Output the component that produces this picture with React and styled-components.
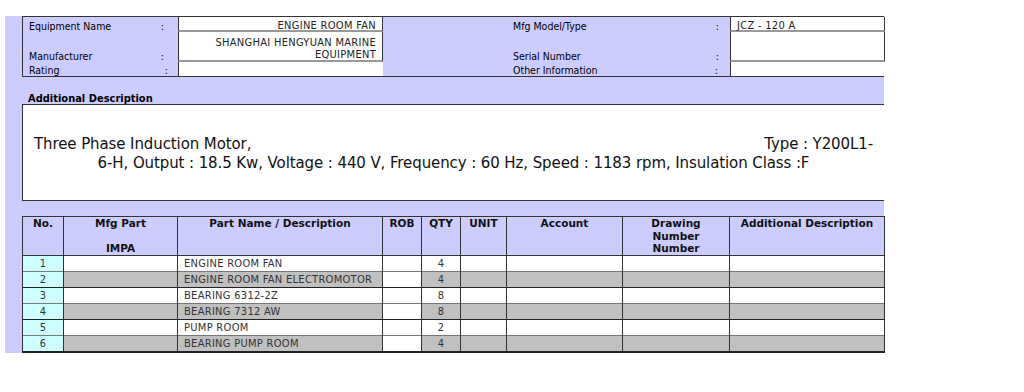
import styled, { createGlobalStyle } from "styled-components";

const GlobalStyle = createGlobalStyle`
    html, body {
        margin: 0;
        padding: 0;
        background: #fff;
    }
    body {
        font-family: "DejaVu Sans Condensed", "DejaVu Sans", sans-serif;
        font-stretch: condensed;
        color: #000;
    }
`;

const SPage = styled.div`
    padding: 16px 0 0 5px;
`;

const SPanel = styled.section`
    width: 862px;
    padding-left: 17px;
    background: #ccccff;
`;

const SInfo = styled.div`
    display: grid;
    grid-template-columns: 155px 205px 347px 155px;
    grid-template-rows: 15px 30px 14px;
    border: 1px solid #333;
    box-sizing: border-box;
    font-size: 11px;
`;

const SLabel = styled.div`
    display: flex;
    align-items: ${p => p.$bottom ? "flex-end" : "center"};
    justify-content: space-between;
    padding: 3px ${p => p.$pr || 14}px 0 ${p => p.$pl || 6}px;
    font-size: 10.5px;
    line-height: ${p => p.$bottom ? 11 : 13}px;
    white-space: nowrap;
`;

const SValue = styled.div`
    background: #fff;
    border-left: 1px solid #333;
    border-right: ${p => p.$last ? "none" : "1px solid #333"};
    border-bottom: ${p => p.$last ? "none" : "2px solid #999"};
    display: flex;
    flex-direction: column;
    justify-content: center;
    align-items: ${p => p.$left ? "flex-start" : "flex-end"};
    padding: ${p => p.$pt ?? 4}px 6px 0;
    line-height: 12px;
    text-align: ${p => p.$left ? "left" : "right"};
    color: #222;
    letter-spacing: 0.3px;
`;

const SSectionTitle = styled.div`
    height: 27px;
    display: flex;
    align-items: flex-end;
    padding: 0 0 0 6px;
    box-sizing: border-box;
    font-size: 11px;
    font-weight: bold;
    line-height: 10px;
`;

const SDescBox = styled.div`
    height: 97px;
    box-sizing: border-box;
    background: #fff;
    border: 1px solid #333;
    border-right: none;
    display: flex;
    flex-direction: column;
    justify-content: center;
    font-family: "DejaVu Sans", sans-serif;
    font-stretch: normal;
    font-size: 15px;
    letter-spacing: -0.1px;
    line-height: 19px;
    color: #111;
    padding-top: 2px;
`;

const SDescLine = styled.div`
    display: flex;
    justify-content: ${p => p.$spread ? "space-between" : "center"};
    padding: 0 11px 0 11px;
`;

const SGap = styled.div`
    height: 15px;
`;

const STable = styled.table`
    width: 862px;
    table-layout: fixed;
    border-collapse: collapse;
    font-size: 11px;
    border: 1px solid #222;
    border-bottom: 2px solid #222;
`;

const STh = styled.th`
    height: 38px;
    padding: 0 2px;
    vertical-align: top;
    text-align: center;
    font-family: "DejaVu Sans", sans-serif;
    font-stretch: normal;
    font-size: 10.5px;
    font-weight: bold;
    line-height: 12.5px;
    color: #111;
    background: #ccccff;
    border: 1px solid #333;
`;

const STr = styled.tr`
    height: 15px;
`;

const STd = styled.td`
    height: 15px;
    padding: 0 6px;
    line-height: 14px;
    text-align: ${p => p.$center ? "center" : "left"};
    color: #333;
    letter-spacing: 0.3px;
    background: ${p => p.$bg};
    border-left: 1px solid #333;
    border-right: 1px solid #333;
    border-top: 1px solid ${p => p.$line};
    white-space: nowrap;
    overflow: hidden;
`;

const columns = [
    { w: 41, title: "No." },
    { w: 114, title: <>Mfg Part<br /><br />IMPA</> },
    { w: 205, title: "Part Name / Description" },
    { w: 39, title: "ROB" },
    { w: 39, title: "QTY" },
    { w: 46, title: "UNIT" },
    { w: 116, title: "Account" },
    { w: 107, title: <>Drawing<br />Number<br />Number</> },
    { w: 155, title: "Additional Description" },
];

const parts = [
    { name: "ENGINE ROOM FAN", qty: 4 },
    { name: "ENGINE ROOM FAN ELECTROMOTOR", qty: 4 },
    { name: "BEARING 6312-2Z", qty: 8 },
    { name: "BEARING 7312 AW", qty: 8 },
    { name: "PUMP ROOM", qty: 2 },
    { name: "BEARING PUMP ROOM", qty: 4 },
];

function PartRow({ index, part }) {
    const odd = index % 2 === 1;
    const fill = odd ? "#c0c0c0" : "#fff";
    const line = odd ? "#777" : "#222";
    return (
        <STr>
            <STd $center $bg="#ccffff" $line={line}>{index + 1}</STd>
            <STd $bg={fill} $line={line}></STd>
            <STd $bg={fill} $line={line}>{part.name}</STd>
            <STd $bg="#fff" $line={line}></STd>
            <STd $center $bg={fill} $line={line}>{part.qty}</STd>
            <STd $bg={fill} $line={line}></STd>
            <STd $bg={fill} $line={line}></STd>
            <STd $bg={fill} $line={line}></STd>
            <STd $bg={fill} $line={line}></STd>
        </STr>
    );
}

export default function App() {
    return (
        <SPage>
            <GlobalStyle />
            <SPanel>
                <SInfo>
                    <SLabel><span>Equipment Name</span><span>:</span></SLabel>
                    <SValue>ENGINE ROOM FAN</SValue>
                    <SLabel $pl={130} $pr={11}><span>Mfg Model/Type</span><span>:</span></SLabel>
                    <SValue $left>JCZ - 120 A</SValue>

                    <SLabel $bottom><span>Manufacturer</span><span>:</span></SLabel>
                    <SValue $pt={6}>SHANGHAI HENGYUAN MARINE<br />EQUIPMENT</SValue>
                    <SLabel $bottom $pl={130} $pr={11}><span>Serial Number</span><span>:</span></SLabel>
                    <SValue $left></SValue>

                    <SLabel $pr={10}><span>Rating</span><span>:</span></SLabel>
                    <SValue $last></SValue>
                    <SLabel $pl={130} $pr={12}><span>Other Information</span><span>:</span></SLabel>
                    <SValue $last $left></SValue>
                </SInfo>

                <SSectionTitle>Additional Description</SSectionTitle>
                <SDescBox>
                    <SDescLine $spread>
                        <span>Three Phase Induction Motor,</span>
                        <span>Type : Y200L1-</span>
                    </SDescLine>
                    <SDescLine>
                        6-H, Output : 18.5 Kw, Voltage : 440 V, Frequency : 60 Hz, Speed : 1183 rpm, Insulation Class :F
                    </SDescLine>
                </SDescBox>
                <SGap />

                <STable>
                    <colgroup>
                        {columns.map((c, i) => <col key={i} style={{ width: c.w }} />)}
                    </colgroup>
                    <thead>
                        <tr>
                            {columns.map((c, i) => <STh key={i}>{c.title}</STh>)}
                        </tr>
                    </thead>
                    <tbody>
                        {parts.map((p, i) => <PartRow key={i} index={i} part={p} />)}
                    </tbody>
                </STable>
            </SPanel>
        </SPage>
    );
}
